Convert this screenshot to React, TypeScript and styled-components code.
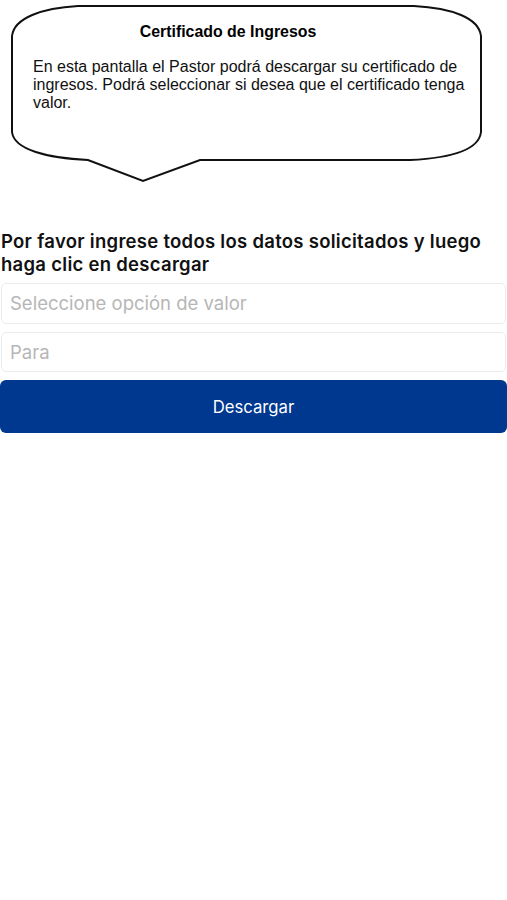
import React from 'react';
import styled, { createGlobalStyle } from 'styled-components';

const GlobalStyle = createGlobalStyle`
	html, body {
		margin: 0;
		padding: 0;
		background: #fff;
	}
	body {
		font-family: Inter, "Noto Sans", sans-serif;
		-webkit-font-smoothing: antialiased;
	}
	* {
		box-sizing: border-box;
	}
`;

const Page = styled.div`
	width: 507px;
	min-height: 900px;
	background: #fff;
`;

const Bubble = styled.div`
	position: relative;
	height: 186px;
	padding: 23px 0 0 33px;
`;

const BubbleShape = styled.svg`
	position: absolute;
	left: 0;
	top: 0;
	z-index: 0;
`;

const BubbleTitle = styled.div`
	position: relative;
	width: 390px;
	text-align: center;
	font-family: "Liberation Sans", Arial, sans-serif;
	font-weight: 700;
	font-size: 15.9px;
	line-height: 18px;
	color: #000;
`;

const BubbleBody = styled.p`
	position: relative;
	margin: 17px 0 0;
	width: 436px;
	font-family: "Liberation Sans", Arial, sans-serif;
	font-size: 16px;
	line-height: 18px;
	color: #111;
`;

const Form = styled.div`
	display: flex;
	flex-direction: column;
	padding-top: 44px;
`;

const Heading = styled.h2`
	margin: 0 0 7px 1px;
	font-family: Inter, "Noto Sans", sans-serif;
	font-weight: 600;
	font-size: 18.5px;
	line-height: 23px;
	letter-spacing: 0.28px;
	color: #111;
`;

const Field = styled.input`
	height: 40.5px;
	margin: 0 1px 8px 1px;
	padding: 0 8px;
	border: 1px solid #ececec;
	border-radius: 5px;
	background: #fff;
	font-family: Inter, "Noto Sans", sans-serif;
	font-size: 18.5px;
	color: #222;
	outline: none;
	&::placeholder {
		color: #b6b6b6;
	}
`;

const DownloadButton = styled.button`
	height: 53px;
	border: none;
	border-radius: 6px;
	background: #00378f;
	color: #fff;
	font-family: Inter, "Noto Sans", sans-serif;
	font-size: 16.7px;
	cursor: pointer;
`;

const App = () => {
	return (
		<>
			<GlobalStyle />
			<Page>
				<Bubble>
					<BubbleShape width="507" height="186" viewBox="0 0 507 186">
						<path
							d="M78,6 L414,6 C452,8 479,18 481,36 L481,132 C479,150 452,158 410,160 L200,160 L143,181 L88,160 C48,158 14,150 12,132 L12,36 C14,18 42,8 78,6 Z"
							fill="#fff"
							stroke="#111"
							strokeWidth="2"
						/>
					</BubbleShape>
					<BubbleTitle>Certificado de Ingresos</BubbleTitle>
					<BubbleBody>
						En esta pantalla el Pastor podrá descargar su certificado de ingresos. Podrá seleccionar si desea que el certificado tenga valor.
					</BubbleBody>
				</Bubble>
				<Form>
					<Heading>Por favor ingrese todos los datos solicitados y luego haga clic en descargar</Heading>
					<Field placeholder="Seleccione opción de valor" />
					<Field placeholder="Para" />
					<DownloadButton>Descargar</DownloadButton>
				</Form>
			</Page>
		</>
	);
};

export default App;
